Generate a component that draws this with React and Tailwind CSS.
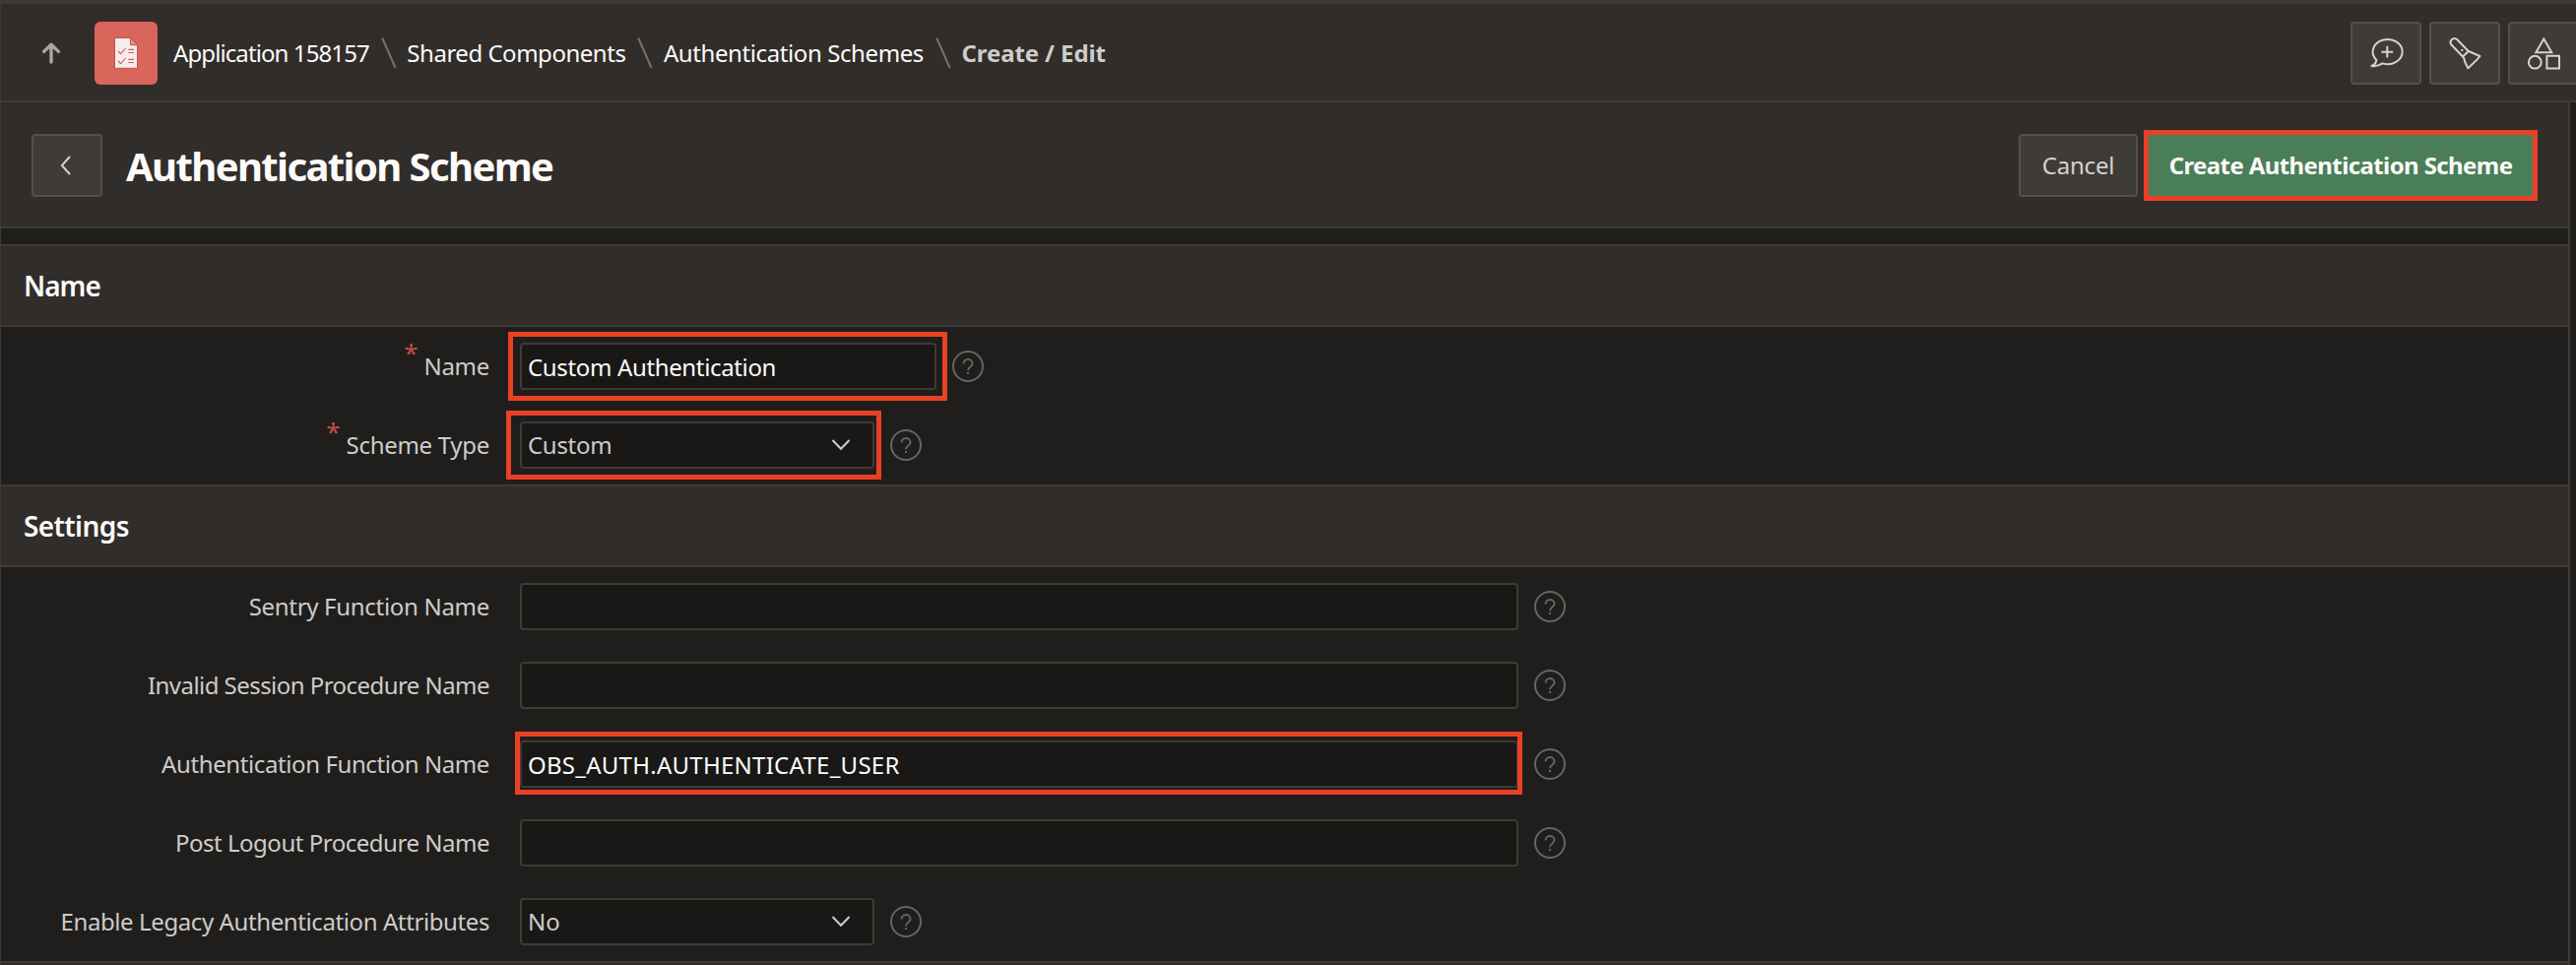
import React from "react";

function Slash() {
  return (
    <svg width="16" height="32" viewBox="0 0 16 32" className="ml-3 mr-[10.5px] shrink-0" fill="none">
      <path d="M1.2 0.5L14.6 31" stroke="#76726f" strokeWidth="2" />
    </svg>
  );
}

function HelpIcon() {
  return (
    <svg width="32" height="32" viewBox="0 0 32 32" className="ml-4 shrink-0" fill="none" stroke="#676461" strokeWidth="2">
      <circle cx="16" cy="16" r="15" />
      <path d="M11.6 13.4c0-2.6 2-4.4 4.4-4.4s4.5 1.8 4.5 4.3c0 3.6-4.5 3.2-4.5 6.9" />
      <path d="M15 23h2" />
    </svg>
  );
}

function IconButton({ children, className = "" }) {
  return (
    <button className={`flex h-16 w-[72px] shrink-0 items-center justify-center rounded border-2 border-[#54504c] bg-[#3f3b36] ${className}`}>
      <svg width="32" height="32" viewBox="0 0 32 32" className="overflow-visible" fill="none" stroke="#d4d2cf" strokeWidth="2" strokeLinejoin="round">
        {children}
      </svg>
    </button>
  );
}

function Highlight({ className }) {
  return <div className={`pointer-events-none absolute border-[5px] border-[#ea4025] ${className}`} />;
}

function SectionTitle({ children, className }) {
  return (
    <h2 className={`flex h-[84px] shrink-0 items-center border-y-2 border-[#3e3b37] bg-[#312d2a] pl-[23px] text-[28px] font-semibold text-[#fcfbfa] ${className}`}>
      {children}
    </h2>
  );
}

function Row({ label, labelClass, required, children }) {
  return (
    <div className="flex h-20 shrink-0 items-center">
      <label className="mr-[31px] flex w-[496px] items-center justify-end whitespace-nowrap text-[#cdccca]">
        {required && <span className="mr-1.5 pb-7 text-[26px] leading-10 text-[#bf5040]">*</span>}
        <span className={labelClass}>{label}</span>
      </label>
      <div className="relative flex items-center">{children}</div>
      <HelpIcon />
    </div>
  );
}

function Field({ value, className }) {
  return (
    <div className={`flex h-12 items-center whitespace-nowrap rounded border-2 border-[#3e3b35] bg-[#191816] pl-1.5 pt-px text-[#fcfbfa] ${className}`}>
      {value}
    </div>
  );
}

function Select({ value, className }) {
  return (
    <div className={`flex h-12 w-[360px] items-center justify-between rounded border-2 border-[#3e3b35] bg-[#191816] pl-1.5 pr-[22px] text-[#cdccca] ${className}`}>
      {value}
      <svg width="20" height="12" viewBox="0 0 20 12" fill="none" stroke="#cdccca" strokeWidth="2">
        <path d="M1.5 1L10 9.8L18.5 1" />
      </svg>
    </div>
  );
}

export default function App() {
  return (
    <div className="flex h-[980px] w-[2616px] flex-col overflow-hidden border-l border-t-4 border-[#3e3a37] bg-[#201e1c] font-['Noto_Sans','Open_Sans',sans-serif] text-[24px] leading-10">
      <header className="flex h-[100px] shrink-0 items-center border-b-2 border-[#3e3b37] bg-[#312d2a] pl-[41px] pt-0.5 text-[#fcfbfa]">
        <svg width="20" height="22" viewBox="0 0 20 22" fill="none" stroke="#a8a5a2" strokeWidth="3.4" strokeLinecap="round" strokeLinejoin="round">
          <path d="M10 20V2.2M2.6 9.4L10 2.2L17.4 9.4" />
        </svg>
        <div className="ml-[34px] mr-4 flex h-16 w-16 shrink-0 items-center justify-center rounded-md bg-[#d9655b]">
          <svg width="24" height="32" viewBox="0 0 24 32" fill="none">
            <path d="M0.5 0.5H16.5L23.5 7.7V31.3H0.5Z" fill="#f8ecea" stroke="#b7574f" strokeWidth="1" />
            <path d="M16.5 0.5V7.7H23.5Z" fill="#e3958e" stroke="#b7574f" strokeWidth="1" />
            <path d="M4 14l2.6 2.6L11.6 11M4 24l2.6 2.6L11.6 21M14.3 12.4H20M14.3 15.5H20M14.3 22.4H20M14.3 25.5H20" stroke="#c5625a" strokeWidth="1.1" />
          </svg>
        </div>
        <nav className="flex items-center whitespace-nowrap">
          <a className="tracking-[-0.9px]">Application 158157</a>
          <Slash />
          <a className="tracking-[-0.48px]">Shared Components</a>
          <Slash />
          <a className="tracking-[-0.4px]">Authentication Schemes</a>
          <Slash />
          <span className="font-bold tracking-[-0.1px] text-[#cdccca]">Create / Edit</span>
        </nav>
        <div className="-mr-[3px] ml-auto flex shrink-0 gap-2">
          <IconButton>
            <path d="M6.3 22.8A15 12.6 0 1 1 12.5 26.4C9.5 28.4 5.5 29.6 1.4 29C4.6 27.6 6.3 25.6 6.3 22.8ZM17.3 8.8V20.6M11.4 14.7H23.2" />
          </IconButton>
          <IconButton>
            <path d="M14 19.5L2.2 7.2A4 4 0 0 1 7.9 1.8L19.8 14ZM19.8 14L31.4 19C28 24 24 26.4 19.4 31.3C18 28 15.4 25 15.4 21.6L14 19.5" />
            <path d="M12.3 13H14.3" />
          </IconButton>
          <IconButton>
            <path d="M16.3 1.4L24.3 15.3H8.3ZM19.4 18.8H32V31.6H19.4Z" strokeLinejoin="miter" />
            <circle cx="7.3" cy="25.2" r="6.4" />
          </IconButton>
        </div>
      </header>

      <main className="flex w-[2609px] flex-1 flex-col overflow-hidden border-r-2 border-[#3e3b37]">
        <div className="flex h-32 shrink-0 items-center border-b-2 border-[#3e3b37] bg-[#312d2a] pl-[31px] pr-9 pt-0.5">
          <button className="flex h-16 w-[72px] items-center justify-center rounded border-2 border-[#54504c] bg-[#3f3b36] pr-0.5">
            <svg width="12" height="20" viewBox="0 0 12 20" fill="none" stroke="#d4d2cf" strokeWidth="2">
              <path d="M10 1L1.8 10L10 19" />
            </svg>
          </button>
          <h1 className="ml-6 whitespace-nowrap pt-0.5 text-[40px] font-bold tracking-[-1.6px] text-[#fcfbfa]">Authentication Scheme</h1>
          <button className="ml-auto flex h-16 w-[121px] items-center justify-center rounded border-2 border-[#54504c] bg-[#3f3b36] tracking-[-0.2px] text-[#d4d2cf]">
            Cancel
          </button>
          <div className="relative ml-[11px]">
            <button className="flex h-16 w-[390px] items-center justify-center whitespace-nowrap bg-[#4a7e58] font-bold tracking-[-0.6px] text-[#fcfbfa]">
              Create Authentication Scheme
            </button>
            <Highlight className="-inset-x-[5px] -inset-y-1" />
          </div>
        </div>

        <SectionTitle className="mt-4 tracking-[-1px]">Name</SectionTitle>
        <Row label="Name" labelClass="tracking-[-0.3px]" required>
          <Field value="Custom Authentication" className="w-[423px] tracking-[-0.35px]" />
          <Highlight className="-bottom-[11px] -left-3 -right-[11px] -top-[11px]" />
        </Row>
        <Row label="Scheme Type" labelClass="tracking-[-0.3px]" required>
          <Select value="Custom" className="tracking-[-0.3px]" />
          <Highlight className="-bottom-[11px] -left-3.5 -right-[7px] -top-[11px]" />
        </Row>

        <SectionTitle className="tracking-[-0.6px]">Settings</SectionTitle>
        <Row label="Sentry Function Name" labelClass="tracking-[-0.3px]">
          <Field className="w-[1014px]" />
        </Row>
        <Row label="Invalid Session Procedure Name" labelClass="tracking-[-0.55px]">
          <Field className="w-[1014px]" />
        </Row>
        <Row label="Authentication Function Name" labelClass="tracking-[-0.4px]">
          <Field value="OBS_AUTH.AUTHENTICATE_USER" className="w-[1014px] tracking-[0.26px]" />
          <Highlight className="-bottom-[7px] -left-[5px] -right-1 -top-[9px]" />
        </Row>
        <Row label="Post Logout Procedure Name" labelClass="tracking-[-0.48px]">
          <Field className="w-[1014px]" />
        </Row>
        <Row label="Enable Legacy Authentication Attributes" labelClass="tracking-[-0.4px]">
          <Select value="No" />
        </Row>
        <div className="h-1 shrink-0 border-t-2 border-[#3e3b37] bg-[#312d2a]" />
      </main>
    </div>
  );
}
